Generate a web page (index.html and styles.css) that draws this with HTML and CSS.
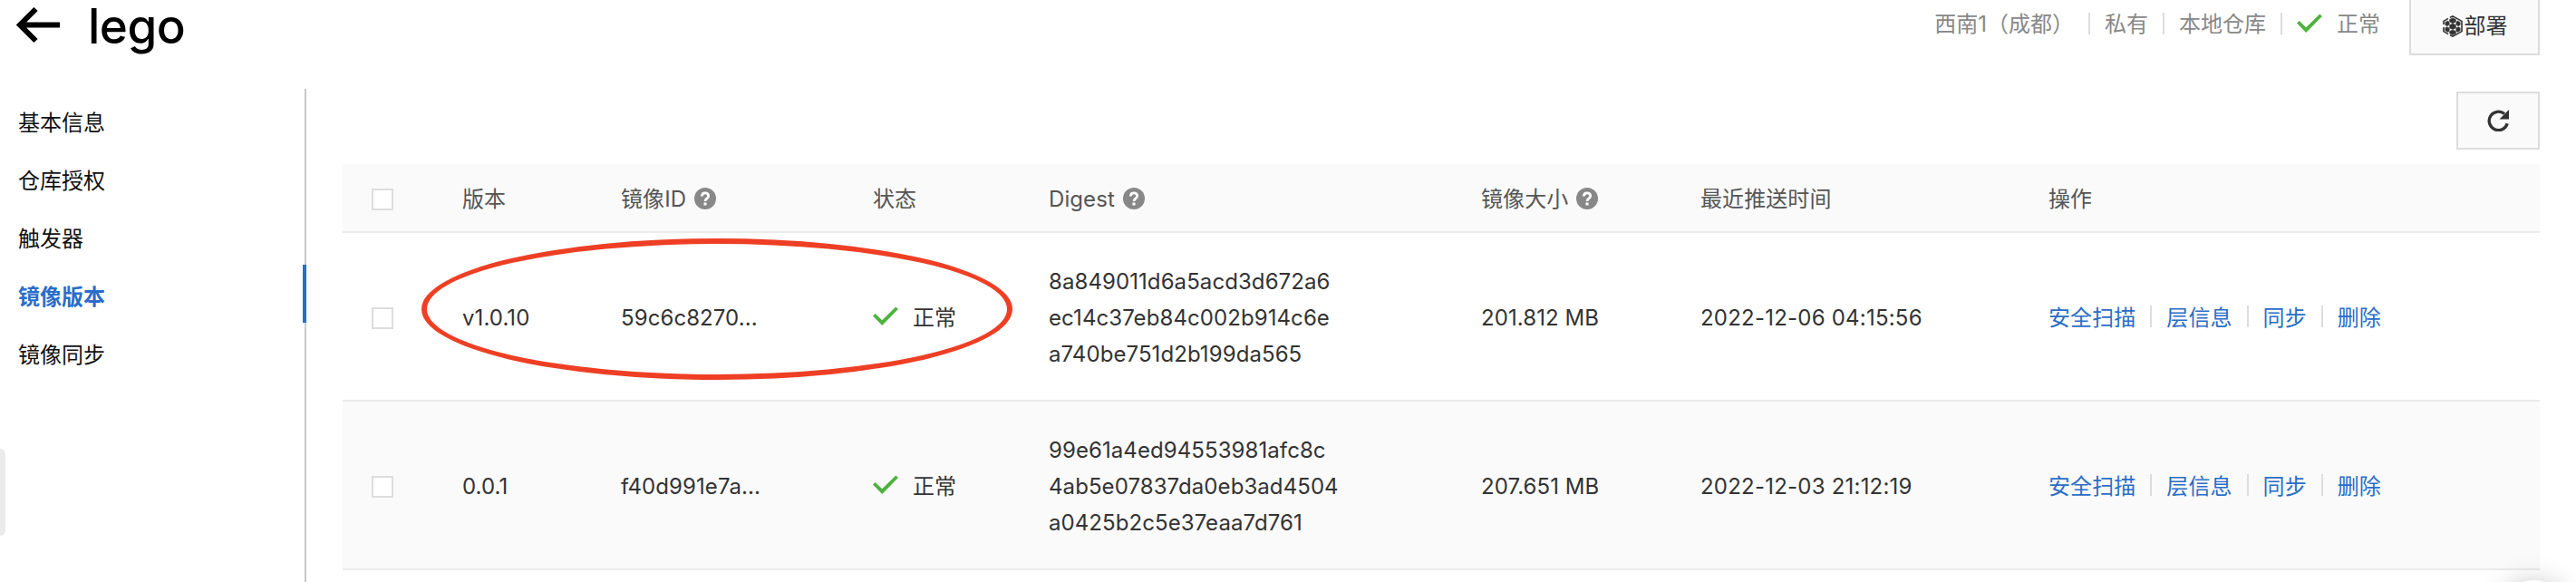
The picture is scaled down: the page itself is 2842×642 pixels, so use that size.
FILE: index.html
```html
<!DOCTYPE html>
<html lang="zh-CN">
<head>
<meta charset="utf-8">
<title>lego</title>
<link rel="stylesheet" href="styles.css">
</head>
<body>
<svg class="defs" aria-hidden="true">
  <symbol id="check" viewBox="0 0 28 22"><path d="M0 10.400 2.600 7.900 10.200 15.200 25.300 0.400 27.900 3 10.200 21Z" fill="#4eb23d"/></symbol>
  <symbol id="help" viewBox="0 0 24 24"><circle cx="12" cy="12" r="12" fill="#888"/><path d="M8.300 9.600C8.300 4.600 15.700 4.600 15.700 9.200C15.700 12 12 11.900 12 15" fill="none" stroke="#fff" stroke-width="2.700"/><rect x="10.500" y="16.500" width="3" height="3" fill="#fff"/></symbol>
</svg>
<header class="top">
  <svg class="back" viewBox="0 0 48 40"><path d="M48 19.500H4M21.500 2 4 19.500 21.500 37" fill="none" stroke="#000" stroke-width="6"/></svg>
  <h1 class="title">lego</h1>
  <div class="meta">
    <span class="txt">西南1（成都）</span><i class="sep"></i>
    <span class="txt">私有</span><i class="sep"></i>
    <span class="txt">本地仓库</span><i class="sep"></i>
    <svg class="check"><use href="#check"/></svg><span class="txt">正常</span>
  </div>
  <button class="btn deploy"><svg class="hex" viewBox="0 0 24 24"><path d="M9 2.200 12 .9 22 6.400V17.600L12 23.100 9 21.800M2 10V6.400L7 3.400M2 13V17.600L7 20.600" fill="none" stroke="#333" stroke-width="1.600"/><g fill="#333" stroke="#333" stroke-width=".5"><path d="M12 2.800 15.400 4.500V7L12 8.700 8.600 7V4.500Z"/><path d="M12 9 15.400 10.600V13.900L12 15.500 8.600 13.900V10.600Z"/><path d="M12 15.900 15.400 17.500V20L12 21.600 8.600 20V17.500Z"/><path d="M6.700 6 8.200 7.600V10.200L5.800 11.700 3.800 10.600V7.600Z"/><path d="M17.300 6 20.200 7.600V10.600L18.200 11.700 15.800 10.200V7.600Z"/><path d="M5.800 12.700 8.200 14V17.200L6.700 18.400 3.800 16.800V13.800Z"/><path d="M18.200 12.700 20.200 13.800V16.800L17.300 18.400 15.800 17.200V14Z"/></g></svg>部署</button>
</header>
<div class="body">
  <nav class="side">
    <a class="item">基本信息</a>
    <a class="item">仓库授权</a>
    <a class="item">触发器</a>
    <a class="item active">镜像版本</a>
    <a class="item">镜像同步</a>
  </nav>
  <main class="main">
    <div class="tools"><button class="btn refresh"><svg viewBox="0 0 24 24"><path d="M22.200 15.200A10.200 10.200 0 1 1 19 4.600" fill="none" stroke="#333" stroke-width="3.300"/><path d="M24 0V10.500H13.500Z" fill="#333"/></svg></button></div>
    <div class="table">
      <div class="row head">
        <div><i class="box"></i></div>
        <div>版本</div>
        <div>镜像ID<svg class="help"><use href="#help"/></svg></div>
        <div>状态</div>
        <div>Digest<svg class="help"><use href="#help"/></svg></div>
        <div>镜像大小<svg class="help"><use href="#help"/></svg></div>
        <div>最近推送时间</div>
        <div>操作</div>
      </div>
      <div class="row">
        <div><i class="box"></i></div>
        <div>v1.0.10</div>
        <div>59c6c8270...</div>
        <div><svg class="check"><use href="#check"/></svg>正常</div>
        <div class="digest">8a849011d6a5acd3d672a6<br>ec14c37eb84c002b914c6e<br>a740be751d2b199da565</div>
        <div>201.812 MB</div>
        <div class="date">2022-12-06 04:15:56</div>
        <div class="acts"><a>安全扫描</a><i class="sep"></i><a>层信息</a><i class="sep"></i><a>同步</a><i class="sep"></i><a>删除</a></div>
        <div class="mark"></div>
      </div>
      <div class="row even">
        <div><i class="box"></i></div>
        <div>0.0.1</div>
        <div>f40d991e7a...</div>
        <div><svg class="check"><use href="#check"/></svg>正常</div>
        <div class="digest">99e61a4ed94553981afc8c<br>4ab5e07837da0eb3ad4504<br>a0425b2c5e37eaa7d761</div>
        <div>207.651 MB</div>
        <div class="date">2022-12-03 21:12:19</div>
        <div class="acts"><a>安全扫描</a><i class="sep"></i><a>层信息</a><i class="sep"></i><a>同步</a><i class="sep"></i><a>删除</a></div>
      </div>
    </div>
  </main>
</div>
<div class="handle"></div>
<div class="corner"><div class="bubble"></div></div>
</body>
</html>
```
FILE: styles.css
```css
* { box-sizing: border-box; }
body {
  margin: 0;
  width: 2842px;
  height: 642px;
  overflow: hidden;
  position: relative;
  background: #fff;
  color: #333;
  font: 24px/40px Inter, "Noto Sans CJK SC", sans-serif;
}
svg { display: block; flex: none; }
.defs { position: absolute; width: 0; height: 0; }
.top { display: flex; height: 98px; padding: 0 40px 0 18px; align-items: flex-start; }
.back { width: 48px; height: 40px; margin-top: 8px; }
.title { margin: -3px 0 0 31px; font-size: 53px; line-height: 64px; font-weight: 500; color: #000; letter-spacing: -0.5px; }
.meta { display: flex; align-items: center; height: 52px; margin-left: auto; margin-right: 32px; color: #888; }
.txt { padding-top: 2px; }
.sep { width: 2px; height: 24px; margin: 0 16px; background: #ddd; flex: none; }
.check { width: 28px; height: 22px; margin-right: 16px; }
.btn {
  display: flex; align-items: center; justify-content: center;
  padding: 0; border: 2px solid #ddd; background: #fafafa; color: #333; font: inherit;
}
.deploy { width: 144px; height: 65px; margin-top: -4px; }
.hex { width: 24px; height: 24px; margin-right: 1px; }
.body { display: flex; height: 544px; }
.side { width: 338px; border-right: 2px solid #c8c8c8; padding: 2px 0 0 20px; }
.item { display: block; height: 64px; line-height: 71px; color: #111; }
.item.active { color: #2a6dc8; font-weight: 600; border-right: 2px solid #2a6dc8; box-shadow: 2px 0 #2a6dc8; }
.main { flex: 1; padding: 3px 40px 0; }
.tools { display: flex; justify-content: flex-end; height: 80px; }
.refresh { width: 92px; height: 64px; }
.refresh svg { width: 24px; height: 24px; }
.row {
  position: relative;
  display: grid;
  grid-template-columns: 100px 175px 278px 194px 477px 242px 384px 1fr;
  padding: 4px 0 0 32px;
  height: 186px;
  align-items: center;
  border-bottom: 2px solid #ebebeb;
  letter-spacing: 0.08px;
}
.row > div { display: flex; align-items: center; }
.row > .digest { display: block; }
.row .check, .row .sep { margin-top: -4px; }
.row .date { letter-spacing: 0.22px; }
.head { height: 76px; background: #fafafa; color: #555; }
.even { background: #fafafa; }
.box { width: 24px; height: 24px; border: 2px solid #ddd; background: #fff; }
.help { width: 24px; height: 24px; margin: -2px 0 0 9px; }
.acts a { color: #2a6dc8; }
.row > .mark {
  position: absolute; left: 87px; top: 6px; width: 652px; height: 156px;
  border: 6px solid #ee3f24; border-radius: 50%;
}
.handle { position: absolute; left: 0; top: 495px; width: 6px; height: 96px; border-radius: 0 6px 6px 0; background: #ebebeb; }
.corner { position: absolute; right: 0; bottom: 0; width: 122px; height: 42px; overflow: hidden; }
.bubble { width: 80px; height: 80px; margin: 40px 0 0 35px; border-radius: 50%; background: #fff; box-shadow: 0 0 30px rgba(0,0,0,.2); }
```
